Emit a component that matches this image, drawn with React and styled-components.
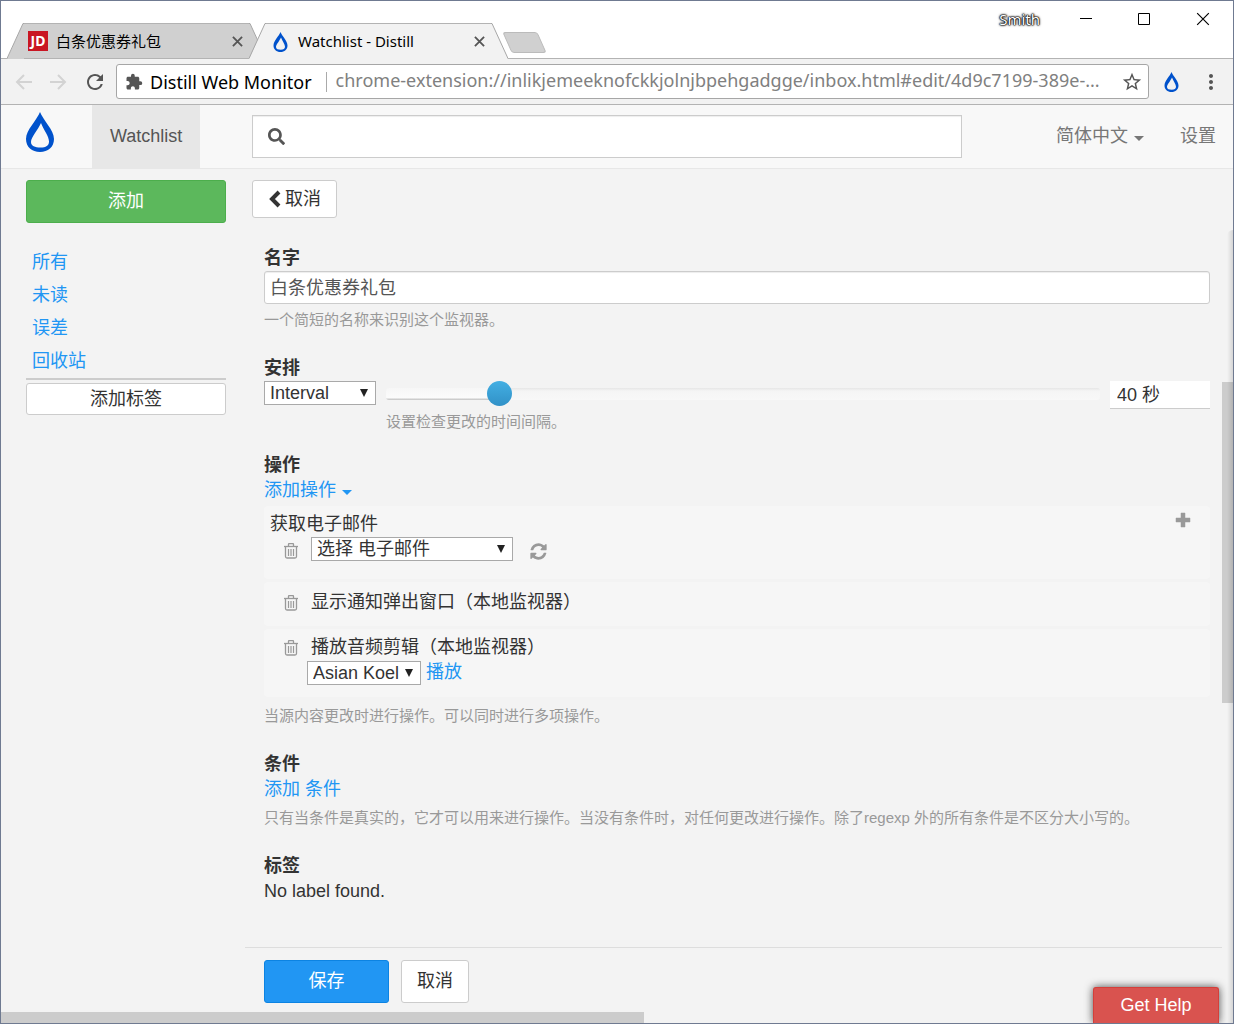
import React, { useState } from 'react';
import styled, { createGlobalStyle } from 'styled-components';
import { FaSearch } from 'react-icons/fa';
import { MdExtension, MdMoreVert, MdRefresh, MdStarBorder } from 'react-icons/md';

const GlobalStyle = createGlobalStyle`
  * { box-sizing: border-box; }
  body {
    margin: 0;
    color: #333;
    font-family: "Liberation Sans", "Noto Sans CJK SC", sans-serif;
    font-size: 18px;
    line-height: 25px;
  }
  button, input, select { font: inherit; color: inherit; }
  button { padding: 0; border: 0; background: none; cursor: pointer; }
  a { color: #2196f3; text-decoration: none; }
  svg { display: block; flex: none; }
`;

const Window = styled.div`
  position: relative;
  display: flex;
  flex-direction: column;
  min-height: 100vh;
  border: 1px solid #6f7a91;
  background: #f3f3f3;
  overflow: hidden;
`;

/* browser chrome */

const TitleBar = styled.header`
  display: flex;
  align-items: flex-end;
  height: 58px;
  padding-left: 6px;
  border-bottom: 1px solid #b3b3b3;
  background: #fff;
  font-family: "Noto Sans", "Noto Sans CJK SC", sans-serif;
  font-size: 15px;
  color: #000;
`;

const TabBox = styled.div`
  position: relative;
  z-index: ${props => props.$active ? 1 : 0};
  display: flex;
  width: 259px;
  height: ${props => props.$active ? 36 : 35}px;
  margin-right: -17px;
  margin-bottom: ${props => props.$active ? -1 : 0}px;
`;

const TabBody = styled.div`
  flex: 1;
  display: flex;
  align-items: center;
  gap: 8px;
  min-width: 0;
  padding: 0 4px;
  border-top: 1px solid #b3b3b3;
  background: ${props => props.$active ? '#f2f2f2' : '#d0d0d0'};
`;

const Favicon = styled.span`
  display: flex;
  justify-content: center;
  width: 20px;
`;

const TabTitle = styled.span`
  flex: 1;
  white-space: nowrap;
`;

const JdIcon = styled.span`
  width: 20px;
  height: 20px;
  background: #c91623;
  color: #fff;
  font: bold 14px/20px "Noto Sans", sans-serif;
  text-align: center;
`;

const NewTab = styled.button`
  width: 35px;
  height: 21px;
  margin: 0 0 5px 16px;
  border: 1px solid #bbb;
  border-radius: 3px;
  background: #d0d0d0;
  transform: skewX(24deg);
`;

const WindowButtons = styled.div`
  align-self: flex-start;
  display: flex;
  align-items: center;
  gap: 40px;
  height: 36px;
  margin-left: auto;
  padding-right: 23px;
`;

const UserName = styled.button`
  color: #fff;
  font-size: 15px;
  text-shadow: 0 0 1px #000, 0 0 1px #000, 0 0 2px #000, 0 0 2px #000, 0 0 3px #555;
`;

const Toolbar = styled.div`
  display: flex;
  align-items: center;
  height: 46px;
  padding: 0 10px 0 14px;
  border-bottom: 1px solid #b3b3b3;
  background: #f2f2f2;
  color: #555;
`;

const NavButtons = styled.div`
  display: flex;
  gap: 16px;
  width: 101px;
`;

const AddressBar = styled.div`
  flex: 1;
  display: flex;
  align-items: center;
  height: 35px;
  padding: 0 5px 0 8px;
  border: 1px solid #a6a6a6;
  border-radius: 3px;
  background: #fff;
  font-family: "Noto Sans", sans-serif;
`;

const ExtensionName = styled.span`
  margin-left: 7px;
  padding-right: 14px;
  color: #000;
  line-height: 20px;
  border-right: 1px solid #aaa;
  white-space: nowrap;
`;

const UrlInput = styled.input`
  flex: 1;
  min-width: 0;
  margin: 0 12px 0 9px;
  padding: 0 0 2px;
  border: 0;
  outline: 0;
  background: none;
  color: #808080;
  text-overflow: ellipsis;
`;

const ExtensionButtons = styled.div`
  display: flex;
  align-items: center;
  gap: 20px;
  margin-left: 15px;
`;

/* application */

const AppHeader = styled.nav`
  display: flex;
  align-items: center;
  height: 64px;
  padding: 0 17px 0 24px;
  border-bottom: 1px solid #e7e7e7;
  background: #f8f8f8;
  color: #777;
`;

const Brand = styled.a`
  padding-bottom: 9px;
`;

const NavTab = styled.a`
  display: flex;
  align-items: center;
  align-self: stretch;
  margin-left: 37px;
  padding: 0 18px;
  background: #e7e7e7;
  color: #555;
`;

const SearchBox = styled.label`
  display: flex;
  align-items: center;
  flex: 0 1 710px;
  height: 43px;
  margin-left: 52px;
  padding: 0 15px;
  border: 1px solid #ccc;
  background: #fff;
  box-shadow: inset 0 1px 1px rgba(0, 0, 0, .07);
  color: #555;
`;

const SearchInput = styled.input`
  flex: 1;
  min-width: 0;
  margin-left: 8px;
  border: 0;
  outline: 0;
  background: none;
`;

const HeaderLinks = styled.div`
  display: flex;
  align-items: center;
  gap: 36px;
  margin-left: auto;
  white-space: nowrap;
`;

const MenuButton = styled.button`
  display: inline-flex;
  align-items: center;
  gap: 6px;
  color: ${props => props.$link ? '#2196f3' : '#777'};

  svg { margin-top: 3px; }
`;

const SettingsLink = styled.a`
  color: #777;
`;

const Content = styled.div`
  flex: 1;
  display: flex;
`;

const Sidebar = styled.aside`
  width: 244px;
  padding: 11px 19px 0 25px;
`;

const TagList = styled.ul`
  margin: 23px 0 0;
  padding: 0 6px;
  list-style: none;
  line-height: 33px;
`;

const Divider = styled.hr`
  height: 2px;
  margin: 0 0 3px;
  border: 0;
  background: #ccc;
`;

const Button = styled.button`
  display: flex;
  align-items: center;
  justify-content: center;
  gap: 3px;
  height: ${props => props.$height || 43}px;
  padding: 0 15px;
  border: 1px solid #ccc;
  border-radius: 3px;
  background: #fff;
  color: #333;
  white-space: nowrap;
`;

const AddButton = styled(Button)`
  width: 100%;
  border-color: #4cae4c;
  background: #5cb85c;
  color: #fff;
`;

const WideButton = styled(Button)`
  width: 100%;
`;

const SaveButton = styled(Button)`
  width: 125px;
  border-color: #0c83e2;
  background: #2196f3;
  color: #fff;
`;

const Main = styled.main`
  flex: 1;
  display: flex;
  flex-direction: column;
  min-width: 0;
`;

const EditBar = styled.div`
  padding: 11px 7px 28px;
`;

const Form = styled.form`
  flex: 1;
  padding: 0 12px 0 19px;
`;

const Section = styled.section`
  margin-bottom: ${props => props.$tight ? 21 : 26}px;
`;

const Heading = styled.label`
  display: block;
  font-weight: bold;
`;

const TextInput = styled.input`
  display: block;
  width: 100%;
  height: 33px;
  padding: 0 5px 4px;
  border: 1px solid #ccc;
  border-radius: 3px;
  box-shadow: inset 0 1px 1px rgba(0, 0, 0, .075);
  background: #fff;
  color: #555;
`;

const Help = styled.p`
  margin: ${props => props.$gap || 6}px 0 0;
  color: #999;
  font-size: 15px;
  line-height: 20px;
`;

const ScheduleRow = styled.div`
  display: flex;
  align-items: flex-start;
  gap: 10px;
`;

const SliderColumn = styled.div`
  flex: 1;
`;

const Slider = styled.input`
  display: block;
  width: 100%;
  height: 25px;
  margin: 0;
  appearance: none;
  background: none;

  &::-webkit-slider-runnable-track {
    height: 12px;
    border-radius: 3px;
    background:
      linear-gradient(#f6f6f6, #fbfbfb 10px, #ccc 11px) 0 0 / var(--filled) 100% no-repeat,
      linear-gradient(#e6e6e6, #f5f5f5 3px, #f8f8f8);
  }

  &::-webkit-slider-thumb {
    appearance: none;
    width: 25px;
    height: 25px;
    margin-top: -7px;
    border-radius: 50%;
    background: linear-gradient(#43afe3, #3191c7);
  }
`;

const Duration = styled.input`
  width: 100px;
  height: 28px;
  padding: 0 7px 3px;
  border: 0;
  border-bottom: 1px solid #ccc;
  background: #fff;
`;

const SelectBox = styled.span`
  position: relative;
  display: block;
  width: ${props => props.$width}px;
`;

const NativeSelect = styled.select`
  display: block;
  width: 100%;
  height: 24px;
  padding: 0 5px;
  border: 1px solid #a9a9a9;
  border-radius: 0;
  background: #fff;
  line-height: 22px;
  appearance: none;
`;

const SelectArrow = styled.svg`
  position: absolute;
  top: 8px;
  right: 8px;
  pointer-events: none;
`;

const Well = styled.div`
  display: flex;
  align-items: flex-start;
  justify-content: space-between;
  min-height: ${props => props.$height}px;
  margin-top: 3px;
  padding: ${props => props.$top || 6}px 19px 0 6px;
  border-radius: 4px;
  background: #f6f6f6;
`;

const ActionRow = styled.div`
  display: flex;
  align-items: center;
  gap: 13px;
  padding-left: 14px;
`;

const AudioRow = styled.div`
  display: flex;
  align-items: center;
  gap: 5px;
  padding-left: 37px;
`;

const IconButton = styled.button`
  color: ${props => props.$dark ? '#555' : '#999'};
  padding: ${props => props.$pad || 0};
`;

const Footer = styled.footer`
  display: flex;
  gap: 12px;
  padding: 12px 19px 9px;
  border-top: 1px solid #ddd;
`;

const ScrollColumn = styled.div`
  display: flex;
  flex-direction: column;
  width: 11px;
`;

const VerticalThumb = styled.div`
  flex: 321;
  background: #ccc;
`;

const Space = styled.div`
  flex: ${props => props.$size};
`;

const HorizontalThumb = styled.div`
  width: 52.2%;
  height: 11px;
  background: #ccc;
`;

const EdgeShade = styled.div`
  position: absolute;
  top: 229px;
  right: 0;
  bottom: 0;
  width: 6px;
  border-top-left-radius: 6px;
  background: linear-gradient(to right, transparent, rgba(0, 0, 0, .12));
  pointer-events: none;
`;

const HelpButton = styled.button`
  position: absolute;
  right: 14px;
  bottom: 0;
  width: 126px;
  height: 36px;
  border: 1px solid #d43f3a;
  border-bottom: 0;
  border-radius: 3px 3px 0 0;
  background: #d9534f;
  box-shadow: 0 0 9px rgba(0, 0, 0, .7);
  color: #fff;
`;

const Drop = ({ width, height }) => (
  <svg width={width} height={height} viewBox="0 0 28 40" aria-hidden="true">
    <path fill="#0052cc" fillRule="evenodd" d="M14 0C17 8 28 18 28 27C28 35 22 40 14 40S0 35 0 27C0 18 11 8 14 0ZM15 11C12 18 5 25 5 30C5 34 9 35.500 14.500 35.500S23 33.500 23 29.500C23 24 17.500 18 15 11Z" />
  </svg>
);

const Caret = () => (
  <svg width="10" height="5" viewBox="0 0 10 5" aria-hidden="true">
    <path d="M0 0h10L5 5z" fill="currentColor" />
  </svg>
);

const Cross = ({ size, stroke }) => (
  <svg width={size} height={size} viewBox="0 0 12 12" aria-hidden="true">
    <path d="M1 1l10 10M11 1L1 11" fill="none" stroke="currentColor" strokeWidth={stroke} />
  </svg>
);

const Arrow = ({ flip }) => (
  <svg width="18" height="18" viewBox="0 0 18 18" aria-hidden="true">
    <path
      d={flip ? 'M1 9h15M9 2l7 7-7 7' : 'M17 9H2M9 2L2 9l7 7'}
      fill="none"
      stroke="#d3d3d3"
      strokeWidth="2"
    />
  </svg>
);

const Chevron = () => (
  <svg width="14" height="18" viewBox="0 0 14 18" aria-hidden="true">
    <path d="M11 2L4 9l7 7" fill="none" stroke="currentColor" strokeWidth="4" />
  </svg>
);

const Trash = () => (
  <svg width="14" height="16" viewBox="0 0 14 16" fill="none" stroke="currentColor" aria-hidden="true">
    <path d="M0 3.500h14" strokeWidth="1.300" />
    <path d="M4.500 3V1.500q0-1 1-1h3q1 0 1 1V3M1.500 3.500v10q0 1.500 1.500 1.500h8q1.500 0 1.500-1.500v-10" strokeWidth="1.300" />
    <path d="M4.500 6v7M7 6v7M9.500 6v7" strokeWidth="1.200" />
  </svg>
);

const Refresh = () => (
  <svg width="19" height="19" viewBox="128 0 1536 1792" aria-hidden="true">
    <path
      fill="currentColor"
      transform="translate(128 0)"
      d="M1511 1056q0 5-1 7-64 268-268 434.500t-478 166.500q-146 0-282.500-55t-243.500-157l-129 129q-19 19-45 19t-45-19-19-45v-448q0-26 19-45t45-19h448q26 0 45 19t19 45-19 45l-137 137q71 66 161 102t187 36q134 0 250-65t186-179q11-17 53-117 8-23 30-23h192q13 0 22.500 9.500t9.500 22.500zm25-800v448q0 26-19 45t-45 19h-448q-26 0-45-19t-19-45 19-45l138-138q-148-137-349-137-134 0-250 65t-186 179q-11 17-53 117-8 23-30 23h-199q-13 0-22.500-9.500t-9.500-22.500v-7q65-268 270-434.500t480-166.500q146 0 284 55.500t245 156.500l130-129q19-19 45-19t45 19 19 45z"
    />
  </svg>
);

const Plus = () => (
  <svg width="16" height="16" viewBox="0 0 16 16" aria-hidden="true">
    <path d="M6 1h4v5h5v4h-5v5H6v-5H1V6h5z" fill="currentColor" stroke="currentColor" strokeLinejoin="round" strokeWidth=".5" />
  </svg>
);

const Tab = ({ active, icon, title }) => {
  const fill = active ? '#f2f2f2' : '#d0d0d0';
  return (
    <TabBox $active={active}>
      <svg width="17" height="36" viewBox="0 0 17 36" aria-hidden="true">
        <path d="M0 36L16 .5H17V36z" fill={fill} />
        <path d="M0 35.500L16 .5H17" fill="none" stroke="#a6a6a6" />
      </svg>
      <TabBody $active={active}>
        <Favicon>{icon}</Favicon>
        <TabTitle>{title}</TabTitle>
        <IconButton $dark aria-label="Close tab" $pad="0 2px">
          <Cross size={11} stroke={2} />
        </IconButton>
      </TabBody>
      <svg width="17" height="36" viewBox="0 0 17 36" aria-hidden="true">
        <path d="M17 36L1 .5H0V36z" fill={fill} />
        <path d="M17 35.500L1 .5H0" fill="none" stroke="#a6a6a6" />
      </svg>
    </TabBox>
  );
};

const Select = ({ width, options, ...rest }) => (
  <SelectBox $width={width}>
    <NativeSelect {...rest}>
      {options.map(option => <option key={option}>{option}</option>)}
    </NativeSelect>
    <SelectArrow width="8" height="8" viewBox="0 0 8 8">
      <path d="M0 0h8L4 8z" fill="#222" />
    </SelectArrow>
  </SelectBox>
);

const tags = ['所有', '未读', '误差', '回收站'];

const App = () => {
  const [name, setName] = useState('白条优惠券礼包');
  const [interval, setInterval] = useState(147);
  const [duration, setDuration] = useState('40 秒');

  return (
    <>
      <GlobalStyle />
      <Window>
        <TitleBar>
          <Tab icon={<JdIcon>JD</JdIcon>} title="白条优惠券礼包" />
          <Tab active icon={<Drop width={15} height={20} />} title="Watchlist - Distill" />
          <NewTab aria-label="New tab" />
          <WindowButtons>
            <UserName>Smith</UserName>
            <button aria-label="Minimize">
              <svg width="12" height="12"><path d="M0 5.500h12" stroke="#000" /></svg>
            </button>
            <button aria-label="Maximize">
              <svg width="24" height="12"><path d="M6.500 .5h11v11h-11z" fill="none" stroke="#000" /></svg>
            </button>
            <button aria-label="Close"><Cross size={14} stroke={1} /></button>
          </WindowButtons>
        </TitleBar>

        <Toolbar>
          <NavButtons>
            <button aria-label="Back"><Arrow /></button>
            <button aria-label="Forward"><Arrow flip /></button>
            <button aria-label="Reload"><MdRefresh size={24} /></button>
          </NavButtons>
          <AddressBar>
            <MdExtension size={18} />
            <ExtensionName>Distill Web Monitor</ExtensionName>
            <UrlInput
              aria-label="Address"
              readOnly
              value="chrome-extension://inlikjemeeknofckkjolnjbpehgadgge/inbox.html#edit/4d9c7199-389e-..."
            />
            <button aria-label="Bookmark"><MdStarBorder size={22} /></button>
          </AddressBar>
          <ExtensionButtons>
            <button aria-label="Distill"><Drop width={15} height={20} /></button>
            <button aria-label="Menu"><MdMoreVert size={24} /></button>
          </ExtensionButtons>
        </Toolbar>

        <AppHeader>
          <Brand href="#home" aria-label="Distill"><Drop width={30} height={40} /></Brand>
          <NavTab href="#watchlist">Watchlist</NavTab>
          <SearchBox>
            <FaSearch size={17} />
            <SearchInput aria-label="Search" />
          </SearchBox>
          <HeaderLinks>
            <MenuButton>简体中文 <Caret /></MenuButton>
            <SettingsLink href="#settings">设置</SettingsLink>
          </HeaderLinks>
        </AppHeader>

        <Content>
          <Sidebar>
            <AddButton>添加</AddButton>
            <TagList>
              {tags.map(tag => <li key={tag}><a href="#tag">{tag}</a></li>)}
            </TagList>
            <Divider />
            <WideButton $height={32}>添加标签</WideButton>
          </Sidebar>

          <Main>
            <EditBar>
              <Button $height={38}><Chevron />取消</Button>
            </EditBar>
            <Form id="edit" onSubmit={(e) => e.preventDefault()}>
              <Section>
                <Heading htmlFor="name">名字</Heading>
                <TextInput id="name" value={name} onChange={(e) => setName(e.target.value)} />
                <Help>一个简短的名称来识别这个监视器。</Help>
              </Section>

              <Section $tight>
                <Heading htmlFor="schedule">安排</Heading>
                <ScheduleRow>
                  <Select id="schedule" width={112} options={['Interval']} />
                  <SliderColumn>
                    <Slider
                      type="range"
                      aria-label="Interval"
                      min="0"
                      max="1000"
                      value={interval}
                      onChange={(e) => setInterval(e.target.value)}
                      style={{ '--filled': `${interval / 10}%` }}
                    />
                    <Help>设置检查更改的时间间隔。</Help>
                  </SliderColumn>
                  <Duration aria-label="Duration" value={duration} onChange={(e) => setDuration(e.target.value)} />
                </ScheduleRow>
              </Section>

              <Section>
                <Heading as="div">操作</Heading>
                <MenuButton $link type="button">添加操作 <Caret /></MenuButton>
                <Well $height={73}>
                  <div>
                    获取电子邮件
                    <ActionRow>
                      <IconButton type="button" aria-label="Delete" $pad="4px 0 0"><Trash /></IconButton>
                      <Select width={202} aria-label="电子邮件" options={['选择 电子邮件']} />
                      <IconButton type="button" aria-label="Refresh" $pad="4px 3px 0"><Refresh /></IconButton>
                    </ActionRow>
                  </div>
                  <IconButton type="button" aria-label="Add"><Plus /></IconButton>
                </Well>
                <Well $height={44} $top={8}>
                  <ActionRow>
                    <IconButton type="button" aria-label="Delete"><Trash /></IconButton>
                    显示通知弹出窗口（本地监视器）
                  </ActionRow>
                </Well>
                <Well $height={68}>
                  <div>
                    <ActionRow>
                      <IconButton type="button" aria-label="Delete"><Trash /></IconButton>
                      播放音频剪辑（本地监视器）
                    </ActionRow>
                    <AudioRow>
                      <Select width={114} aria-label="Audio" options={['Asian Koel']} />
                      <a href="#play">播放</a>
                    </AudioRow>
                  </div>
                </Well>
                <Help $gap={9}>当源内容更改时进行操作。可以同时进行多项操作。</Help>
              </Section>

              <Section>
                <Heading as="div">条件</Heading>
                <a href="#condition">添加 条件</a>
                <Help>只有当条件是真实的，它才可以用来进行操作。当没有条件时，对任何更改进行操作。除了regexp 外的所有条件是不区分大小写的。</Help>
              </Section>

              <Section>
                <Heading as="div">标签</Heading>
                No label found.
              </Section>
            </Form>
            <Footer>
              <SaveButton type="submit" form="edit">保存</SaveButton>
              <Button>取消</Button>
            </Footer>
          </Main>

          <ScrollColumn>
            <Space $size={213} />
            <VerticalThumb />
            <Space $size={309} />
          </ScrollColumn>
        </Content>
        <HorizontalThumb />
        <EdgeShade />
        <HelpButton>Get Help</HelpButton>
      </Window>
    </>
  );
};

export default App;
